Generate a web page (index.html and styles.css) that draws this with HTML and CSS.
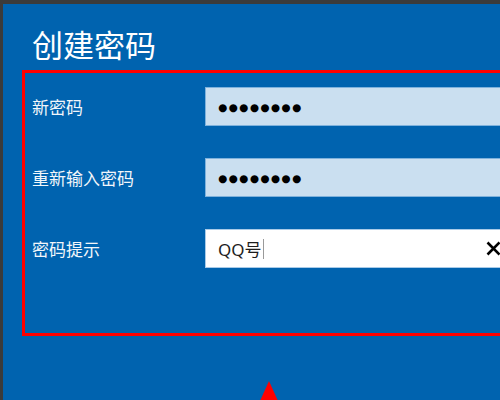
FILE: index.html
```html
<!DOCTYPE html>
<html>
<head>
  <meta charset="UTF-8">
  <title>创建密码</title>
  <link rel="stylesheet" href="styles.css">
</head>
<body>
  <div class="dialog">
    <h1 class="title">创建密码</h1>

    <!-- Highlighted form area -->
    <div class="form-box">
      <div class="form-row">
        <div class="label">新密码</div>
        <div class="field field-password">●●●●●●●●</div>
      </div>
      <div class="form-row">
        <div class="label">重新输入密码</div>
        <div class="field field-password">●●●●●●●●</div>
      </div>
      <div class="form-row">
        <div class="label">密码提示</div>
        <div class="field field-hint">
          <span class="hint-text">QQ号</span>
          <span class="caret"></span>
          <svg class="clear-icon" width="15" height="15" viewBox="0 0 15 15">
            <path d="M1.5 1.5 L13.5 13.5 M13.5 1.5 L1.5 13.5" stroke="#000" stroke-width="2.6" fill="none"/>
          </svg>
        </div>
      </div>
    </div>

    <div class="arrow"></div>
  </div>
</body>
</html>
```

FILE: styles.css
```css
body {
  margin: 0;
  width: 500px;
  height: 400px;
  overflow: hidden;
  background-color: #3b3b3b;
  font-family: "Noto Sans", "Noto Sans CJK SC", sans-serif;
}

/* Blue dialog */
.dialog {
  margin: 4px 0 0 3px;
  width: 497px;
  height: 396px;
  background-color: #0063af;
  overflow: hidden;
}

.title {
  margin: 0;
  padding: 21px 0 0 29px;
  height: 45px;
  font-size: 31px;
  line-height: 40px;
  font-weight: 400;
  color: #fff;
}

/* Red annotation frame, runs off the right edge */
.form-box {
  margin-left: 19px;
  width: 640px;
  border: 3px solid #ff0000;
  border-right: none;
  padding: 14px 0 65px 0;
  display: flex;
  flex-direction: column;
  gap: 32px;
}

.form-row {
  display: grid;
  grid-template-columns: 173px 330px;
  align-items: center;
  padding-left: 7px;
}

.label {
  font-size: 17px;
  color: #f2f6fa;
}

.field {
  height: 37px;
  display: flex;
  align-items: center;
  padding-left: 12px;
  border: 1px solid #7fb2dc;
}

.field-password {
  background-color: #cadff0;
  color: #000;
  font-family: "DejaVu Sans", sans-serif;
  font-size: 10.5px;
  letter-spacing: 1.4px;
}

.field-hint {
  background-color: #fff;
  border-color: #a9cbe8;
  font-size: 17px;
  color: #1e1e1e;
}

.caret {
  width: 1px;
  height: 20px;
  margin-left: 1px;
  background-color: #9a9a9a;
}

.clear-icon {
  margin-left: auto;
  margin-right: 33px;
}

/* Red pointer at the bottom */
.arrow {
  margin: 45px 0 0 257px;
  width: 0;
  height: 0;
  border-left: 9px solid transparent;
  border-right: 9px solid transparent;
  border-bottom: 20px solid #ff0000;
}
```
